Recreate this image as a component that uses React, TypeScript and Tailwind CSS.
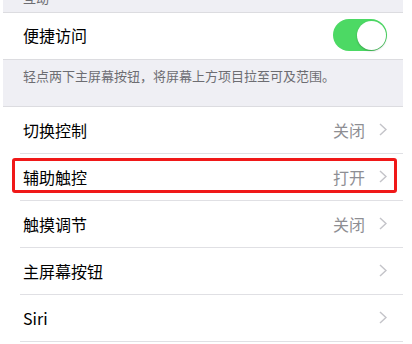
const font = "font-['Noto_Sans_CJK_SC','Noto_Sans',sans-serif]";

type Row = { label: string; value?: string; highlight?: boolean };

const rows: Row[] = [
  { label: "切换控制", value: "关闭" },
  { label: "辅助触控", value: "打开", highlight: true },
  { label: "触摸调节", value: "关闭" },
  { label: "主屏幕按钮" },
  { label: "Siri" },
];

function Chevron() {
  return (
    <svg width="8" height="13" viewBox="0 0 8 13" fill="none">
      <polyline points="1,1 7,6.5 1,12" stroke="#c4c4c9" strokeWidth="1.5" />
    </svg>
  );
}

function Toggle() {
  return (
    <div className="w-[54px] h-[32px] rounded-full bg-[#4cd964] flex items-center justify-end p-[1.5px]">
      <div className="w-[29px] h-[29px] rounded-full bg-white shadow-[0_1px_2px_rgba(0,0,0,0.25)]" />
    </div>
  );
}

function SettingRow({ row }: { row: Row }) {
  return (
    <div className="relative h-[47px] flex items-center pl-[20px] pr-[16px] pb-[2px]">
      {row.highlight && (
        <div className="absolute left-[9px] right-[6px] top-[4px] bottom-[8px] border-[3px] border-[#f01818] rounded-[3px]" />
      )}
      <span className="text-[16px] text-black flex-1">{row.label}</span>
      {row.value && (
        <span className="text-[16px] text-[#8e8e93] mr-[14px]">{row.value}</span>
      )}
      <Chevron />
      <div className="absolute left-[17px] right-0 bottom-0 h-px bg-[#e0e0e4]" />
    </div>
  );
}

export default function App() {
  return (
    <div className={`w-[412px] h-[344px] bg-white overflow-hidden ${font}`}>
      <div className="ml-[3px] w-[400px]">
        {/* section header, cut off at the top */}
        <div className="h-[13px] bg-[#efeff4] border-b border-[#dcdce0] overflow-hidden">
          <div className="pl-[20px] -mt-[12px] text-[13px] leading-[20px] text-[#6d6d72]">互动</div>
        </div>

        <div className="h-[46px] bg-white flex items-center pl-[20px] pr-[16px] pb-[2px]">
          <span className="text-[16px] text-black flex-1">便捷访问</span>
          <Toggle />
        </div>

        <div className="h-[48px] bg-[#efeff4] border-y border-[#dcdce0] pl-[20px] pt-[2px]">
          <span className="text-[13px] leading-[20px] text-[#6d6d72]">
            轻点两下主屏幕按钮，将屏幕上方项目拉至可及范围。
          </span>
        </div>

        <div className="bg-white">
          {rows.map((r) => (
            <SettingRow key={r.label} row={r} />
          ))}
        </div>
      </div>
    </div>
  );
}
